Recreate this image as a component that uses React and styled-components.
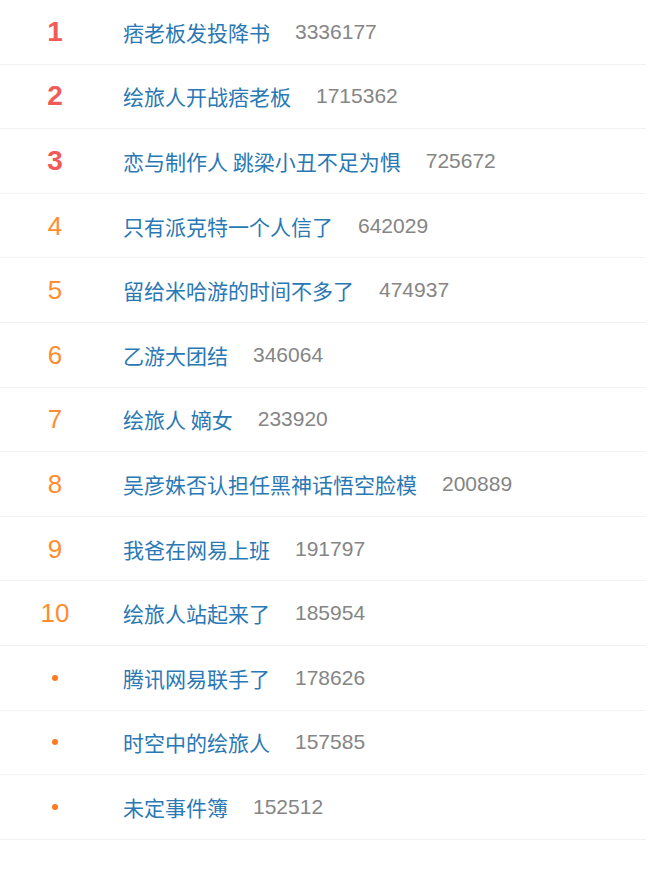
import React from "react";
import styled, { createGlobalStyle } from "styled-components";

const Global = createGlobalStyle`
  html, body { margin: 0; padding: 0; background: #fff; }
  body { font-family: "Liberation Sans", "Noto Sans CJK SC", sans-serif; }
`;

const List = styled.ul`
  list-style: none;
  margin: 0;
  padding: 0;
  width: 646px;
`;

const Row = styled.li`
  height: 64.6px;
  box-sizing: border-box;
  display: grid;
  grid-template-columns: 110px 1fr;
  align-items: center;
  border-bottom: 1.5px solid #f2f2f2;
`;

const Rank = styled.span`
  display: flex;
  justify-content: center;
  align-items: center;
  font-family: "Liberation Sans", Arial, sans-serif;
  font-size: ${(p) => (p.$top ? "28px" : "26px")};
  font-weight: ${(p) => (p.$top ? 700 : 400)};
  color: ${(p) => (p.$top ? "#f25a58" : "#ff8c2e")};
  line-height: 1;
`;

const Dot = styled.span`
  width: 6px;
  height: 6px;
  border-radius: 50%;
  background: #ff7a1f;
`;

const Content = styled.div`
  display: flex;
  align-items: center;
  gap: 25px;
  padding-left: 13px;
`;

const Title = styled.span`
  font-family: "Noto Sans CJK SC", "Liberation Sans", sans-serif;
  font-size: 21px;
  color: #2a78b4;
`;

const Count = styled.span`
  font-family: "Liberation Sans", Arial, sans-serif;
  font-size: 21px;
  color: #858585;
`;

const items = [
  ["痞老板发投降书", "3336177"],
  ["绘旅人开战痞老板", "1715362"],
  ["恋与制作人 跳梁小丑不足为惧", "725672"],
  ["只有派克特一个人信了", "642029"],
  ["留给米哈游的时间不多了", "474937"],
  ["乙游大团结", "346064"],
  ["绘旅人 嫡女", "233920"],
  ["吴彦姝否认担任黑神话悟空脸模", "200889"],
  ["我爸在网易上班", "191797"],
  ["绘旅人站起来了", "185954"],
  ["腾讯网易联手了", "178626"],
  ["时空中的绘旅人", "157585"],
  ["未定事件簿", "152512"],
];

export default function App() {
  return (
    <>
      <Global />
      <List>
        {items.map(([title, count], i) => (
          <Row key={i}>
            <Rank $top={i < 3}>{i < 10 ? i + 1 : <Dot />}</Rank>
            <Content>
              <Title>{title}</Title>
              <Count>{count}</Count>
            </Content>
          </Row>
        ))}
      </List>
    </>
  );
}
